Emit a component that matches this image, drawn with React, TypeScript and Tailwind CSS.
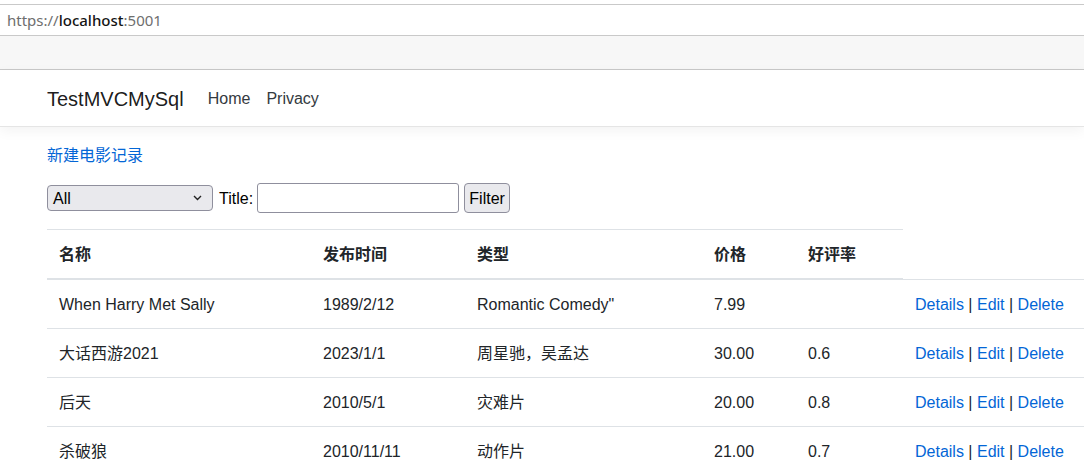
import React from 'react';

const rows = [
  { name: 'When Harry Met Sally', date: '1989/2/12', genre: 'Romantic Comedy"', price: '7.99', rating: '' },
  { name: '大话西游2021', date: '2023/1/1', genre: '周星驰，吴孟达', price: '30.00', rating: '0.6' },
  { name: '后天', date: '2010/5/1', genre: '灾难片', price: '20.00', rating: '0.8' },
  { name: '杀破狼', date: '2010/11/11', genre: '动作片', price: '21.00', rating: '0.7' },
];

export default function App() {
  return (
    <div
      className="w-[1084px] h-[476px] overflow-hidden bg-white text-[#212529]"
      style={{ fontFamily: '"Liberation Sans", "Noto Sans CJK SC", sans-serif' }}
    >
      {/* 浏览器地址栏 */}
      <div className="h-[4px] bg-white border-b border-[#c9c9c9] box-content" />
      <div
        className="h-[30px] flex items-center pl-[7px] text-[15px] border-b border-[#c9c9c9] box-content"
        style={{ fontFamily: '"Noto Sans", "DejaVu Sans", sans-serif' }}
      >
        <span className="text-[#6e6e6e]">https://</span>
        <span className="text-[#141414] font-medium">localhost</span>
        <span className="text-[#6e6e6e]">:5001</span>
      </div>
      <div className="h-[33px] bg-[#f7f7f7] border-b border-[#c9c9c9] box-content" />

      {/* 导航栏 */}
      <nav className="h-[55px] flex items-center pl-[47px] pt-[1px] border-b border-[#e5e5e5] shadow-[0_4px_12px_rgba(0,0,0,0.05)] box-content">
        <span className="text-[20px] leading-[30px] text-black/90 mr-4">TestMVCMySql</span>
        <a className="px-2 text-[16px] leading-6 text-[#343a40]">Home</a>
        <a className="px-2 text-[16px] leading-6 text-[#343a40]">Privacy</a>
      </nav>

      {/* 主体 */}
      <main className="pl-[47px] pt-4 text-[16px] leading-6">
        <p className="mb-4 pt-[1px] h-[24px]">
          <a className="text-[#0366d6]">新建电影记录</a>
        </p>

        <form className="flex items-center h-[30px] mb-4">
          <div className="relative w-[166px] h-[26px] bg-[#e9e9ed] border border-[#8f8f9d] rounded-[4px] flex items-center pl-[5px] pt-[1px] text-[16px] text-black">
            All
            <svg className="absolute right-[10px] top-[9px]" width="9" height="6" viewBox="0 0 9 6">
              <path d="M1 1 L4.5 4.5 L8 1" fill="none" stroke="#222" strokeWidth="1.4" />
            </svg>
          </div>
          <span className="ml-[6px] mr-[4px] pt-[1px] text-black">Title:</span>
          <div className="w-[202px] h-[30px] border border-[#8f8f9d] rounded-[3px] bg-white" />
          <div className="ml-[5px] w-[46px] h-[30px] bg-[#e9e9ed] border border-[#8f8f9d] rounded-[4px] flex items-center justify-center pt-[1px] text-black">
            Filter
          </div>
        </form>

        <table className="table-fixed border-collapse w-[1060px]">
          <colgroup>
            <col className="w-[264px]" />
            <col className="w-[154px]" />
            <col className="w-[237px]" />
            <col className="w-[94px]" />
            <col className="w-[107px]" />
            <col className="w-[204px]" />
          </colgroup>
          <thead>
            <tr>
              {['名称', '发布时间', '类型', '价格', '好评率'].map((h) => (
                <th
                  key={h}
                  className="text-left font-bold px-3 pt-[13px] pb-[11px] border-t border-b-2 border-[#dee2e6] align-bottom"
                >
                  {h}
                </th>
              ))}
            </tr>
          </thead>
          <tbody>
            {rows.map((r) => (
              <tr key={r.name}>
                <td className="px-3 pt-[13px] pb-[11px] border-t border-[#dee2e6]">{r.name}</td>
                <td className="px-3 pt-[13px] pb-[11px] border-t border-[#dee2e6]">{r.date}</td>
                <td className="px-3 pt-[13px] pb-[11px] border-t border-[#dee2e6]">{r.genre}</td>
                <td className="px-3 pt-[13px] pb-[11px] border-t border-[#dee2e6]">{r.price}</td>
                <td className="px-3 pt-[13px] pb-[11px] border-t border-[#dee2e6]">{r.rating}</td>
                <td className="px-3 pt-[13px] pb-[11px] border-t border-[#dee2e6] whitespace-nowrap">
                  <a className="text-[#0366d6]">Details</a> | <a className="text-[#0366d6]">Edit</a> |{' '}
                  <a className="text-[#0366d6]">Delete</a>
                </td>
              </tr>
            ))}
          </tbody>
        </table>
      </main>
    </div>
  );
}
